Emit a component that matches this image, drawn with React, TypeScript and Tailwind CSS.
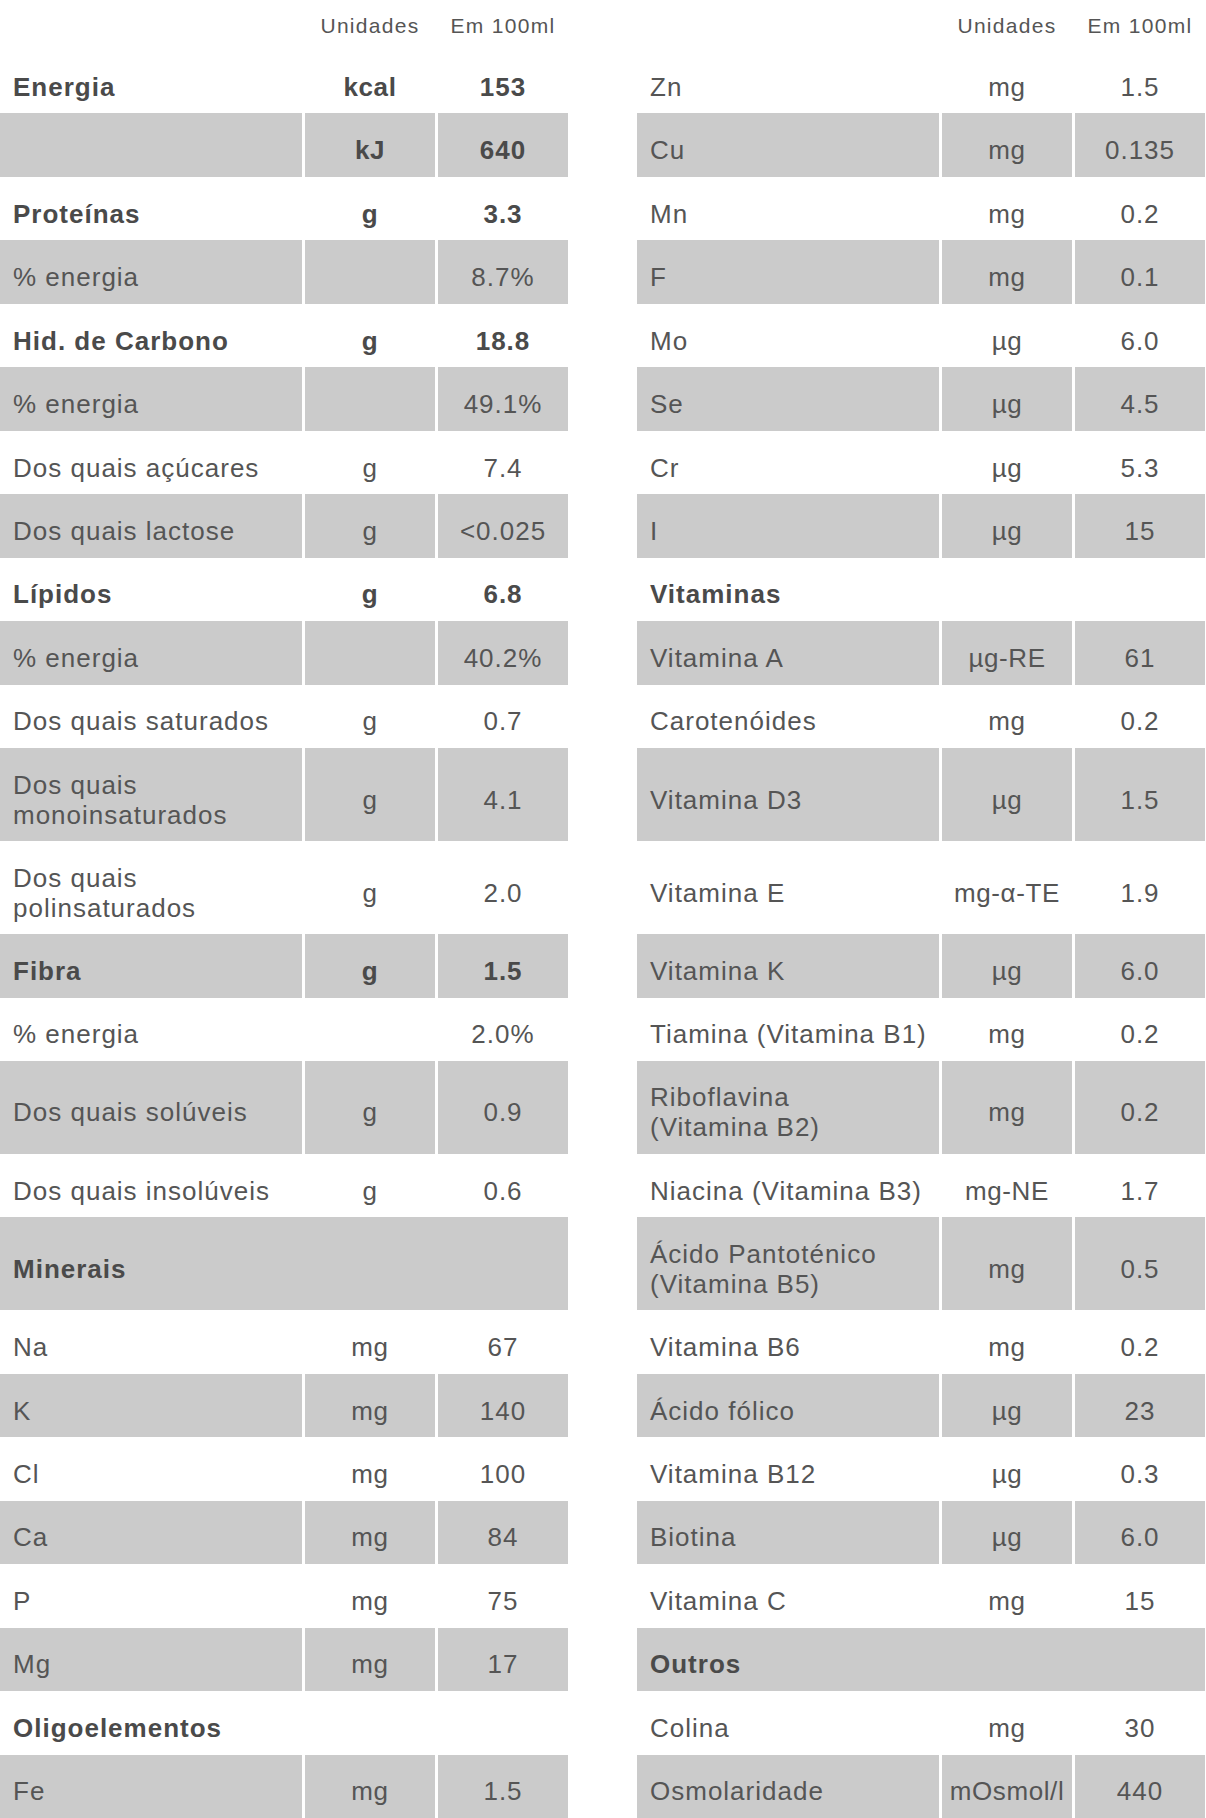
import React from "react";

type Row = {
  name?: string;
  unit?: string;
  value?: string;
  bold?: boolean;
  tall?: boolean;
  full?: boolean;
  lines?: string[];
};

const left: Row[] = [
  { name: "Energia", unit: "kcal", value: "153", bold: true },
  { name: "", unit: "kJ", value: "640", bold: true },
  { name: "Proteínas", unit: "g", value: "3.3", bold: true },
  { name: "% energia", unit: "", value: "8.7%" },
  { name: "Hid. de Carbono", unit: "g", value: "18.8", bold: true },
  { name: "% energia", unit: "", value: "49.1%" },
  { name: "Dos quais açúcares", unit: "g", value: "7.4" },
  { name: "Dos quais lactose", unit: "g", value: "<0.025" },
  { name: "Lípidos", unit: "g", value: "6.8", bold: true },
  { name: "% energia", unit: "", value: "40.2%" },
  { name: "Dos quais saturados", unit: "g", value: "0.7" },
  { lines: ["Dos quais", "monoinsaturados"], unit: "g", value: "4.1", tall: true },
  { lines: ["Dos quais", "polinsaturados"], unit: "g", value: "2.0", tall: true },
  { name: "Fibra", unit: "g", value: "1.5", bold: true },
  { name: "% energia", unit: "", value: "2.0%" },
  { name: "Dos quais solúveis", unit: "g", value: "0.9", tall: true },
  { name: "Dos quais insolúveis", unit: "g", value: "0.6" },
  { name: "Minerais", bold: true, tall: true, full: true },
  { name: "Na", unit: "mg", value: "67" },
  { name: "K", unit: "mg", value: "140" },
  { name: "Cl", unit: "mg", value: "100" },
  { name: "Ca", unit: "mg", value: "84" },
  { name: "P", unit: "mg", value: "75" },
  { name: "Mg", unit: "mg", value: "17" },
  { name: "Oligoelementos", bold: true, full: true },
  { name: "Fe", unit: "mg", value: "1.5" },
];

const right: Row[] = [
  { name: "Zn", unit: "mg", value: "1.5" },
  { name: "Cu", unit: "mg", value: "0.135" },
  { name: "Mn", unit: "mg", value: "0.2" },
  { name: "F", unit: "mg", value: "0.1" },
  { name: "Mo", unit: "µg", value: "6.0" },
  { name: "Se", unit: "µg", value: "4.5" },
  { name: "Cr", unit: "µg", value: "5.3" },
  { name: "I", unit: "µg", value: "15" },
  { name: "Vitaminas", bold: true, full: true },
  { name: "Vitamina A", unit: "µg-RE", value: "61" },
  { name: "Carotenóides", unit: "mg", value: "0.2" },
  { name: "Vitamina D3", unit: "µg", value: "1.5", tall: true },
  { name: "Vitamina E", unit: "mg-α-TE", value: "1.9", tall: true },
  { name: "Vitamina K", unit: "µg", value: "6.0" },
  { name: "Tiamina (Vitamina B1)", unit: "mg", value: "0.2" },
  { lines: ["Riboflavina", "(Vitamina B2)"], unit: "mg", value: "0.2", tall: true },
  { name: "Niacina (Vitamina B3)", unit: "mg-NE", value: "1.7" },
  { lines: ["Ácido Pantoténico", "(Vitamina B5)"], unit: "mg", value: "0.5", tall: true },
  { name: "Vitamina B6", unit: "mg", value: "0.2" },
  { name: "Ácido fólico", unit: "µg", value: "23" },
  { name: "Vitamina B12", unit: "µg", value: "0.3" },
  { name: "Biotina", unit: "µg", value: "6.0" },
  { name: "Vitamina C", unit: "mg", value: "15" },
  { name: "Outros", bold: true, full: true },
  { name: "Colina", unit: "mg", value: "30" },
  { name: "Osmolaridade", unit: "mOsmol/l", value: "440" },
];

function TableRow({ row, gray }: { row: Row; gray: boolean }) {
  const h = row.tall ? "h-[93px]" : "h-[63.5px]";
  const bg = gray ? "bg-[#cbcbcb]" : "bg-white";
  const weight = row.bold ? "font-bold text-[#4a4a4a]" : "font-normal text-[#555555]";
  if (row.full) {
    return (
      <div className={`${h} ${bg} ${weight} flex items-center pl-[13px] pt-[10px]`}>
        <span>{row.name}</span>
      </div>
    );
  }
  return (
    <div className={`${h} grid grid-cols-[302px_130px_130px] gap-x-[3px] ${weight}`}>
      <div className={`${bg} flex items-center pl-[13px] pt-[10px]`}>
        {row.lines ? (
          <div className="flex flex-col leading-[30px]">
            {row.lines.map((l) => (
              <span key={l} className="whitespace-nowrap">{l}</span>
            ))}
          </div>
        ) : (
          <span className="whitespace-nowrap">{row.name}</span>
        )}
      </div>
      <div className={`${bg} flex items-center justify-center whitespace-nowrap pt-[10px] tracking-[0.6px]`}>{row.unit}</div>
      <div className={`${bg} flex items-center justify-center whitespace-nowrap pt-[10px]`}>{row.value}</div>
    </div>
  );
}

function Table({ rows }: { rows: Row[] }) {
  return (
    <div className="flex w-[568px] flex-col">
      <div className="grid h-[50px] grid-cols-[302px_130px_130px] gap-x-[3px] text-[21px] tracking-[1.3px] text-[#555555]">
        <div />
        <div className="flex items-center justify-center pt-[3px]">Unidades</div>
        <div className="flex items-center justify-center pt-[3px]">Em 100ml</div>
      </div>
      {rows.map((r, i) => (
        <TableRow key={i} row={r} gray={i % 2 === 1} />
      ))}
    </div>
  );
}

export default function App() {
  return (
    <div
      className="flex h-[1818px] w-[1206px] gap-x-[69px] overflow-hidden bg-white text-[26px] leading-[28px] tracking-[1px]"
      style={{ fontFamily: '"Liberation Sans", Arial, sans-serif' }}
    >
      <Table rows={left} />
      <Table rows={right} />
    </div>
  );
}
